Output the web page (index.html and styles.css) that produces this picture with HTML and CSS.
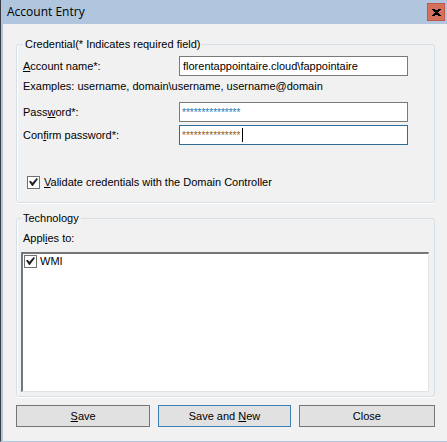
FILE: index.html
```html
<!DOCTYPE html>
<html lang="en">
<head>
<meta charset="utf-8">
<title>Account Entry</title>
<link rel="stylesheet" href="styles.css">
</head>
<body>
<div class="window" role="dialog" aria-labelledby="title">
  <header class="titlebar">
    <h1 class="title" id="title">Account Entry</h1>
    <button class="close" type="button" aria-label="Close window">
      <svg viewBox="0 0 9 7" width="9" height="7" shape-rendering="crispEdges" aria-hidden="true"><path d="M0 0h3v1h3V0h3v1H8v1H7v1H6v1h1v1h1v1h1v1H6V6H3v1H0V6h1V5h1V4h1V3H2V2H1V1H0z"/></svg>
    </button>
  </header>
  <form class="content">
    <fieldset class="group credential">
      <legend>Credential(* Indicates required field)</legend>
      <div class="row">
        <label for="account"><u>A</u>ccount name*:</label>
        <input class="field" id="account" type="text" value="florentappointaire.cloud\fappointaire">
      </div>
      <p class="hint">Examples: username, domain\username, username@domain</p>
      <div class="row">
        <label for="password">Pass<u>w</u>ord*:</label>
        <input class="field secret" id="password" type="text" autocomplete="off" value="***************">
      </div>
      <div class="row">
        <label for="confirm">Con<u>f</u>irm password*:</label>
        <div class="active">
          <input class="field secret current" id="confirm" type="text" autocomplete="off" value="***************">
          <span class="caret"></span>
        </div>
      </div>
      <label class="check validate"><input type="checkbox" checked><span><u>V</u>alidate credentials with the Domain Controller</span></label>
    </fieldset>
    <fieldset class="group technology">
      <legend>Technology</legend>
      <p class="applies" id="applies">Appl<u>i</u>es to:</p>
      <div class="list" role="group" aria-labelledby="applies">
        <label class="check item"><input type="checkbox" checked><span>WMI</span></label>
      </div>
    </fieldset>
    <div class="actions">
      <button class="button" type="button"><span><u>S</u>ave</span></button>
      <button class="button default" type="button"><span>Save and <u>N</u>ew</span></button>
      <button class="button" type="button"><span>Close</span></button>
    </div>
  </form>
</div>
</body>
</html>
```
FILE: styles.css
```css
* {
  box-sizing: border-box;
}

body {
  margin: 0;
  background: #f1f1f1;
  color: #000;
  font: 11px/14px "Liberation Sans", Arial, sans-serif;
}

.window {
  display: flex;
  flex-direction: column;
  min-height: 100vh;
  border-bottom: 1px solid #b0c6de;
  border-left: 1px solid #3c3c44;
  box-shadow: inset 2px 0 #b0c6de;
}

.titlebar {
  display: flex;
  align-items: center;
  justify-content: space-between;
  height: 24px;
  padding: 0 2px 0 6px;
  background: #b0c6de;
}

.title {
  margin: 0;
  font: 12px/16px "Open Sans", "Segoe UI", sans-serif;
}

.close {
  display: flex;
  align-items: center;
  justify-content: center;
  width: 18px;
  height: 18px;
  padding: 0;
  border: 1px solid #bd5a49;
  background: #d5705c;
}

.content {
  display: flex;
  flex: 1;
  flex-direction: column;
  padding: 14px 12px 14px 15px;
}

.group {
  min-width: 0;
  margin: 0;
  padding: 0 6px;
  border: 1px solid #d5dfe5;
  border-radius: 3px;
  box-shadow: inset 1px 0 #fff, 0 1px #fff;
}

legend {
  padding: 0 2px;
  line-height: 12px;
}

u {
  text-underline-offset: 1px;
}

p {
  margin: 0;
}

.credential {
  height: 165px;
  padding-top: 6px;
}

.row {
  display: grid;
  grid-template-columns: 156px 1fr;
  align-items: center;
  margin: 0 20px 3px 0;
}

.field {
  display: block;
  width: 100%;
  height: 20px;
  padding: 0 3px;
  border: 1px solid #7a7a7a;
  border-radius: 0;
  outline: 0;
  background: #fff;
  color: #000;
  font: 11px/14px "Liberation Sans", Arial, sans-serif;
}

.secret {
  padding: 0 2px;
  color: #2477b3;
  font-size: 10px;
}

.active {
  position: relative;
}

.current {
  border-color: #2f6c98;
  color: #946018;
}

.caret {
  position: absolute;
  top: 3px;
  left: 63px;
  width: 1px;
  height: 14px;
  background: #000;
}

.hint {
  margin: 3px 0 9px;
}

.check {
  display: flex;
  align-items: center;
  gap: 4px;
}

.check input {
  display: grid;
  place-items: center;
  width: 13px;
  height: 13px;
  margin: 0;
  border: 1px solid #707070;
  background: #fff;
  appearance: none;
}

.check input:checked::before {
  width: 9px;
  height: 8px;
  background: #222;
  clip-path: polygon(0 45%, 18% 35%, 38% 58%, 85% 0, 100% 12%, 42% 100%, 34% 100%);
  content: "";
}

.validate {
  margin: 30px 0 0 4px;
}

.technology {
  display: flex;
  flex: 1;
  flex-direction: column;
  margin-top: 9px;
  padding: 0 5px 4px 4px;
}

.applies {
  margin: 7px 2px;
}

.list {
  height: 140px;
  padding: 0 1px;
  border: 2px solid #767676;
  border-color: #767676 #e3e3e3 #e3e3e3 #767676;
  border-right-width: 1px;
  border-bottom-width: 1px;
  background: #fff;
}

.item {
  gap: 3px;
}

.actions {
  display: grid;
  grid-template-columns: 134fr 132fr 136fr;
  gap: 8px;
  margin-top: 8px;
}

.button {
  height: 22px;
  padding: 0;
  border: 1px solid #767676;
  border-radius: 0;
  background: #e1e1e1;
  color: #000;
  font: 11px/14px "Liberation Sans", Arial, sans-serif;
}

.default {
  border-color: #3c7fb1;
}
```
